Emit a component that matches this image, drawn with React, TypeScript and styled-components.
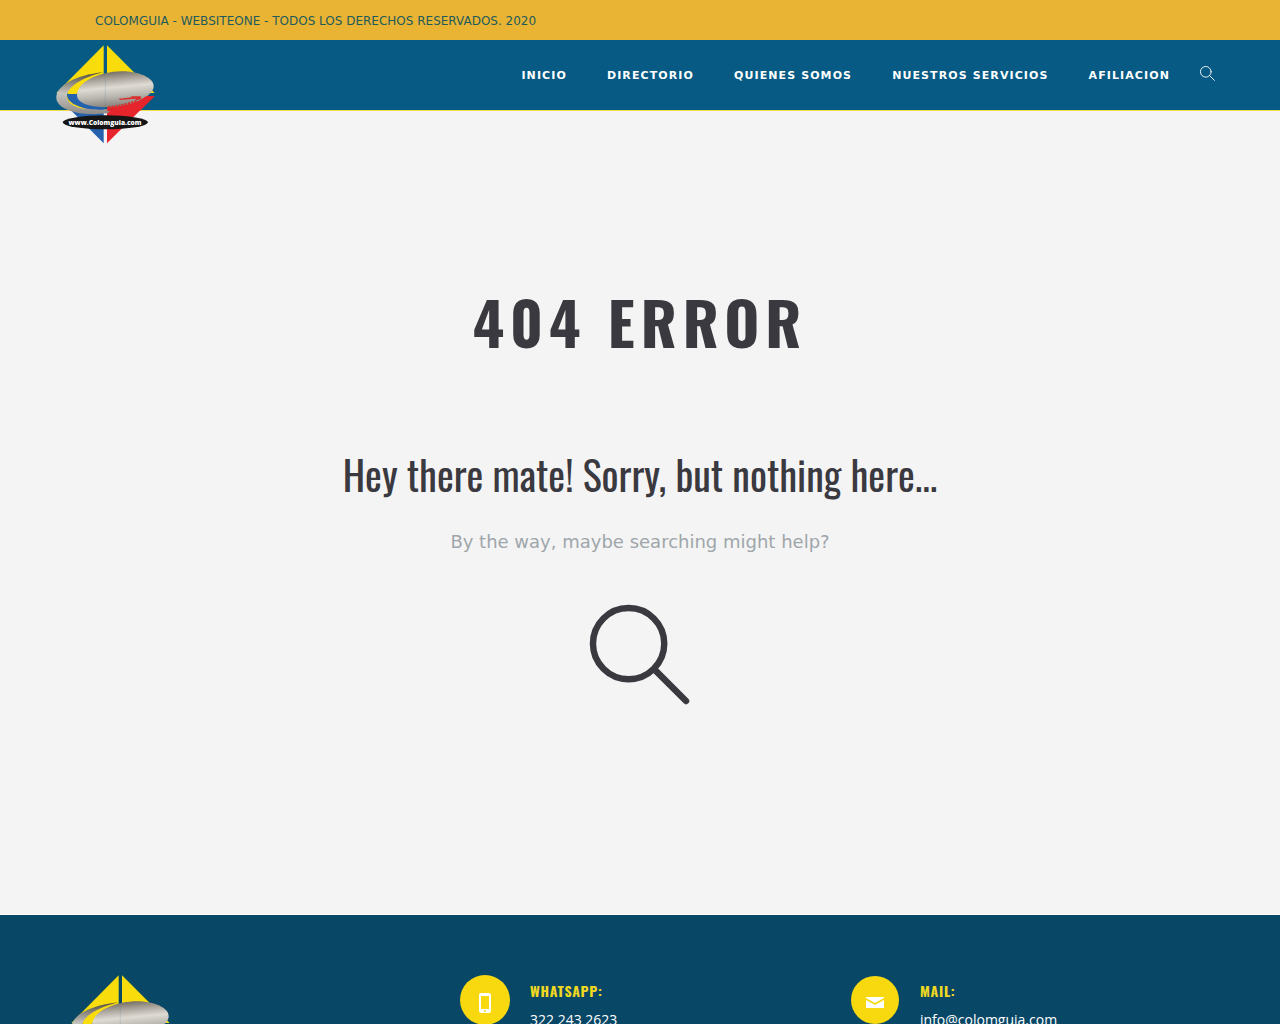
import React from "react";
import styled, { createGlobalStyle } from "styled-components";

const GlobalStyle = createGlobalStyle`
  *, *::before, *::after { box-sizing: border-box; }
  body { margin: 0; background: #f4f4f4; font-family: "DejaVu Sans", sans-serif; }
  h1, h2, h3, p, ul { margin: 0; padding: 0; }
`;

const display = `"Oswald", "Liberation Sans Narrow", "DejaVu Sans Condensed", sans-serif`;

const TopBar = styled.div`
  background: #e9b434;
  color: #1d5b5c;
`;

const Container = styled.div`
  max-width: 1170px;
  margin: 0 auto;
`;

const TopText = styled.p`
  padding: 2px 40px 0;
  font-size: 12px;
  line-height: 38px;
`;

const Header = styled.header`
  background: #065a83;
  border-bottom: 1px solid #f0dc50;
`;

const HeaderRow = styled(Container)`
  display: flex;
  align-items: flex-start;
  justify-content: space-between;
  height: 70px;
  padding-right: 10px;
`;

const LogoLink = styled.a`
  display: block;
  width: 100px;
  height: 100px;
`;

const HeaderLogo = styled(LogoLink)`
  margin-top: 5px;
  position: relative;
  z-index: 1;
`;

const Nav = styled.nav`
  display: flex;
  align-items: flex-start;
  padding-top: 26px;
  gap: 30px;
`;

const Menu = styled.ul`
  display: flex;
  gap: 40px;
  list-style: none;
  font-size: 11px;
  line-height: 20px;
`;

const MenuLink = styled.a`
  color: #fff;
  font-weight: 700;
  letter-spacing: 0.1em;
  text-decoration: none;
`;

const IconButton = styled.button<{ $size: number; $color: string }>`
  display: block;
  padding: 0;
  border: 0;
  background: none;
  cursor: pointer;
  color: ${(p) => p.$color};
  width: ${(p) => p.$size}px;
  height: ${(p) => p.$size}px;

  svg { display: block; width: 100%; height: 100%; overflow: visible; }
`;

const Main = styled.main`
  display: flex;
  flex-direction: column;
  align-items: center;
  padding: 172px 20px 209px;
  text-align: center;
  color: #3a393f;
`;

const Title = styled.h1`
  font: 700 60px/76px ${display};
  letter-spacing: 6px;
`;

const Subtitle = styled.h2`
  margin-top: 85px;
  font: 400 40px/60px ${display};
`;

const Hint = styled.p`
  margin: 24px 0 49px;
  color: #9ea6ab;
  font-size: 18px;
  line-height: 28px;
`;

const Footer = styled.footer`
  background: #084766;
  border-top: 1px solid #fff;
  padding: 60px 0;
`;

const FooterGrid = styled(Container)`
  display: grid;
  grid-template-columns: repeat(3, 1fr);
`;

const FooterCell = styled.div`
  display: flex;
  padding: 0 15px;
`;

const BadgeSlot = styled.div`
  display: flex;
  align-items: center;
  justify-content: center;
  flex: none;
  width: 50px;
  height: 50px;
  margin-right: 20px;
`;

const Badge = styled.span<{ $size: number }>`
  display: flex;
  align-items: center;
  justify-content: center;
  width: ${(p) => p.$size}px;
  height: ${(p) => p.$size}px;
  padding-top: 6px;
  border-radius: 50%;
  background: #f8d90f;
`;

const ContactTitle = styled.h3`
  padding-top: 6px;
  color: #f0d820;
  font: 700 14px/20px ${display};
  letter-spacing: 0.05em;
`;

const ContactLink = styled.a`
  display: block;
  margin-top: 8px;
  color: #fff;
  font: 400 14px/22px "Open Sans", sans-serif;
  text-decoration: none;
`;

function Logo({ id }: { id: string }) {
  const silver = `${id}-silver`;
  const ring = `${id}-ring`;
  return (
    <svg viewBox="45 27 300 300" width="100" height="100" role="img" aria-label="Colomguia">
      <defs>
        <linearGradient id={silver} x1="0.1" y1="0" x2="0.3" y2="1">
          <stop offset="0" stopColor="#5f584e" />
          <stop offset="0.25" stopColor="#a39d94" />
          <stop offset="0.5" stopColor="#dedad4" />
          <stop offset="0.75" stopColor="#b8b4ae" />
          <stop offset="1" stopColor="#8a857e" />
        </linearGradient>
        <linearGradient id={ring} x1="0" y1="0" x2="0" y2="1">
          <stop offset="0" stopColor="#4f4a3e" />
          <stop offset="0.5" stopColor="#c6c4bf" />
          <stop offset="1" stopColor="#8e8b87" />
        </linearGradient>
      </defs>
      <path d="M191 28V171H49Z" fill="#f8dc0c" />
      <path d="M201 28V171H344Z" fill="#f8dc0c" />
      <path d="M50 180H191V322Z" fill="#2462ae" />
      <path d="M201 180H344L201 322Z" fill="#e5242b" />
      <path
        d="M190 109C105 117 47 151 49 187C51 220 115 242 202 232L222 218C145 224 88 210 81 185C78 155 126 124 190 109Z"
        fill={`url(#${ring})`}
      />
      <path d="M112 172C91 188 98 207 140 220C107 215 84 203 81 185C79 166 99 147 129 132C113 147 107 160 112 172Z" fill="#f8dc0c" />
      <path d="M81 174H113C115 196 145 212 196 215L190 221C135 222 80 207 81 174Z" fill="#2462ae" />
      <path
        d="M111 178C111 137 178 107 245 106C300 106 340 126 341 150C342 182 270 214 200 214C150 214 111 202 111 178Z"
        fill={`url(#${silver})`}
      />
      <path d="M344 181H318C292 202 250 214 202 217V226L300 224Z" fill="#e5242b" />
      <path d="M236 188L276 184L272 181L302 181L304 189L284 194L288 188L240 192Z" fill="#d9302f" />
      <path d="M204 213Q254 208 290 194" fill="none" stroke="#d9302f" strokeWidth="5" strokeDasharray="7 3" />
      <path d="M196 112V212" stroke="#3b7d94" strokeWidth="4" opacity="0.12" />
      <ellipse cx="196" cy="259" rx="128" ry="21" fill="#151515" />
      <text
        x="195"
        y="266"
        textAnchor="middle"
        fill="#fff"
        fontFamily="Open Sans, sans-serif"
        fontSize="20"
        fontWeight="800"
      >
        www.Colomguia.com
      </text>
    </svg>
  );
}

function SearchIcon({ stroke }: { stroke: number }) {
  return (
    <svg viewBox="0 0 101 101" fill="none" stroke="currentColor" strokeWidth={stroke} strokeLinecap="round" aria-hidden="true">
      <circle cx="39" cy="39" r="36" />
      <path d="M65 65L97 97" />
    </svg>
  );
}

function PhoneIcon() {
  return (
    <svg width="12" height="20" viewBox="0 0 12 20" aria-hidden="true">
      <path
        fill="#fff"
        fillRule="evenodd"
        d="M2 0H10Q12 0 12 2V18Q12 20 10 20H2Q0 20 0 18V2Q0 0 2 0ZM2 3V16H10V3ZM6 17A1 1 0 1 0 6 19A1 1 0 1 0 6 17Z"
      />
    </svg>
  );
}

function MailIcon() {
  return (
    <svg width="18" height="12" viewBox="0 0 18 12" fill="#fff" aria-hidden="true">
      <path d="M0 0H18V1L9 6L0 1Z" />
      <path d="M0 3L9 8L18 3V11H0Z" />
    </svg>
  );
}

const menu = ["INICIO", "DIRECTORIO", "QUIENES SOMOS", "NUESTROS SERVICIOS", "AFILIACION"];

const contacts = [
  { title: "WHATSAPP:", text: "322 243 2623", href: "tel:3222432623", size: 50, icon: <PhoneIcon /> },
  { title: "MAIL:", text: "info@colomguia.com", href: "mailto:info@colomguia.com", size: 48, icon: <MailIcon /> },
];

export default function App() {
  return (
    <>
      <GlobalStyle />
      <TopBar>
        <Container>
          <TopText>COLOMGUIA - WEBSITEONE - TODOS LOS DERECHOS RESERVADOS. 2020</TopText>
        </Container>
      </TopBar>
      <Header>
        <HeaderRow>
          <HeaderLogo href="#">
            <Logo id="header" />
          </HeaderLogo>
          <Nav>
            <Menu>
              {menu.map((item) => (
                <li key={item}>
                  <MenuLink href="#">{item}</MenuLink>
                </li>
              ))}
            </Menu>
            <IconButton $size={15} $color="#fff" aria-label="Buscar">
              <SearchIcon stroke={6} />
            </IconButton>
          </Nav>
        </HeaderRow>
      </Header>
      <Main>
        <Title>404 ERROR</Title>
        <Subtitle>Hey there mate! Sorry, but nothing here...</Subtitle>
        <Hint>By the way, maybe searching might help?</Hint>
        <IconButton $size={100} $color="#3a393f" aria-label="Search">
          <SearchIcon stroke={6.5} />
        </IconButton>
      </Main>
      <Footer>
        <FooterGrid>
          <FooterCell>
            <LogoLink href="#">
              <Logo id="footer" />
            </LogoLink>
          </FooterCell>
          {contacts.map((c) => (
            <FooterCell key={c.title}>
              <BadgeSlot>
                <Badge $size={c.size}>{c.icon}</Badge>
              </BadgeSlot>
              <div>
                <ContactTitle>{c.title}</ContactTitle>
                <ContactLink href={c.href}>{c.text}</ContactLink>
              </div>
            </FooterCell>
          ))}
        </FooterGrid>
      </Footer>
    </>
  );
}
